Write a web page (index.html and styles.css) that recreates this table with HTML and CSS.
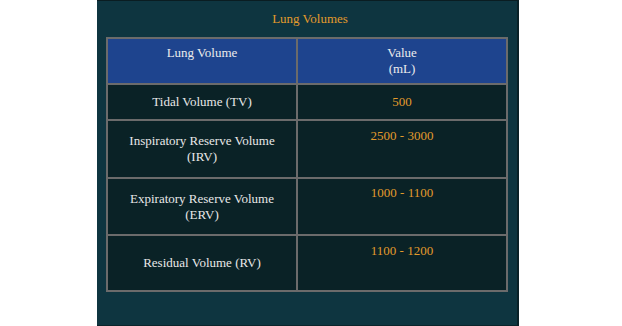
FILE: index.html
```html
<!DOCTYPE html>
<html>
<head>
<meta charset="utf-8">
<link rel="stylesheet" href="styles.css">
</head>
<body>
<div class="panel">
  <div class="title">Lung Volumes</div>
  <div class="grid">
    <div class="cell head top">Lung Volume</div>
    <div class="cell head top">Value<br>(mL)</div>
    <div class="cell name r1">Tidal Volume (TV)</div>
    <div class="cell val mid r1">500</div>
    <div class="cell name r2">Inspiratory Reserve Volume<br>(IRV)</div>
    <div class="cell val top r2">2500 - 3000</div>
    <div class="cell name r3">Expiratory Reserve Volume<br>(ERV)</div>
    <div class="cell val top r3">1000 - 1100</div>
    <div class="cell name r4">Residual Volume (RV)</div>
    <div class="cell val top r4">1100 - 1200</div>
  </div>
</div>
</body>
</html>
```
FILE: styles.css
```css
html, body {
  margin: 0;
  padding: 0;
  background: #ffffff;
}
body {
  font-family: "Liberation Serif", serif;
}
.panel {
  margin-left: 97px;
  width: 422px;
  height: 326px;
  background: #0e3540;
  border-top: 1px solid #0a1d22;
  border-right: 2px solid #0a2127;
  border-bottom: 1px solid #0b252b;
  padding: 0 9px;
  box-sizing: border-box;
}
.title {
  color: #e39b2c;
  font-size: 13px;
  line-height: 16px;
  text-align: center;
  padding-top: 10px;
  padding-left: 6px;
  height: 26px;
  box-sizing: content-box;
}
.grid {
  display: grid;
  grid-template-columns: 188px 208px;
  grid-template-rows: 44px 34px 56px 55px 54px;
  gap: 2px;
  padding: 2px;
  background: #6b6b6b;
  width: 402px;
  box-sizing: border-box;
}
.cell {
  background: #0a2226;
  color: #e8e8e8;
  font-size: 13px;
  line-height: 16px;
  text-align: center;
  display: flex;
  flex-direction: column;
  justify-content: center;
  padding: 0 4px;
}
.cell.head {
  background: #1e448e;
  color: #ececec;
}
.cell.top {
  justify-content: flex-start;
  padding-top: 6px;
}
.cell.val {
  color: #e39b2c;
}
.cell.r2.top, .cell.r4.top {
  padding-top: 7px;
}
```
